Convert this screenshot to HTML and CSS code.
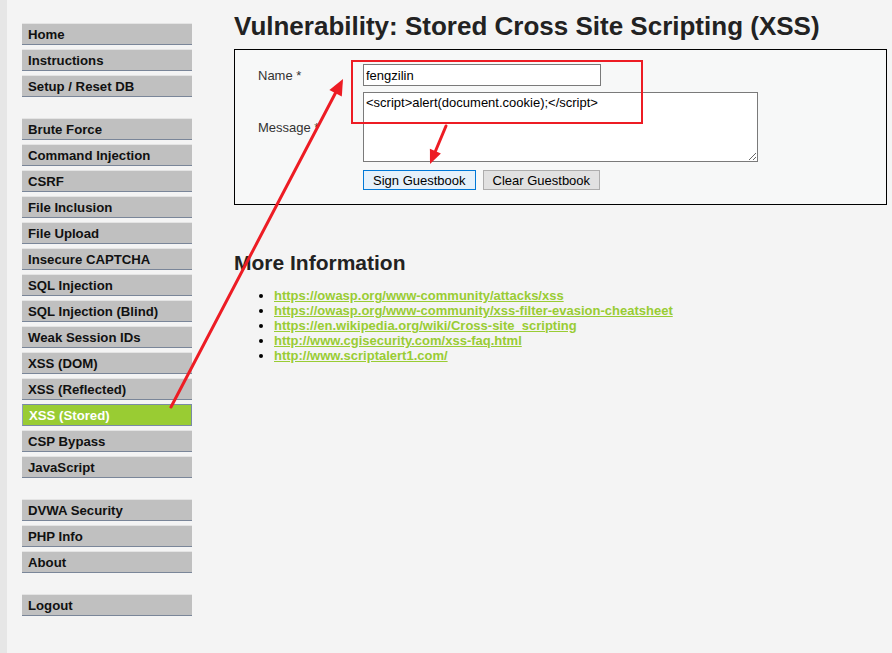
FILE: index.html
```html
<!DOCTYPE html>
<html>
<head>
<meta charset="utf-8">
<link rel="stylesheet" href="styles.css">
</head>
<body>
<div class="page">
  <div class="strip"></div>
  <nav class="sidebar">
    <ul class="menu">
      <li><a>Home</a></li>
      <li><a>Instructions</a></li>
      <li><a>Setup / Reset DB</a></li>
    </ul>
    <ul class="menu">
      <li><a>Brute Force</a></li>
      <li><a>Command Injection</a></li>
      <li><a>CSRF</a></li>
      <li><a>File Inclusion</a></li>
      <li><a>File Upload</a></li>
      <li><a>Insecure CAPTCHA</a></li>
      <li><a>SQL Injection</a></li>
      <li><a>SQL Injection (Blind)</a></li>
      <li><a>Weak Session IDs</a></li>
      <li><a>XSS (DOM)</a></li>
      <li><a>XSS (Reflected)</a></li>
      <li class="active"><a>XSS (Stored)</a></li>
      <li><a>CSP Bypass</a></li>
      <li><a>JavaScript</a></li>
    </ul>
    <ul class="menu">
      <li><a>DVWA Security</a></li>
      <li><a>PHP Info</a></li>
      <li><a>About</a></li>
    </ul>
    <ul class="menu">
      <li><a>Logout</a></li>
    </ul>
  </nav>
  <main class="main">
    <h1 class="title">Vulnerability: Stored Cross Site Scripting (XSS)</h1>
    <div class="code-area">
      <form class="guest-form">
        <label class="lbl">Name *</label>
        <div class="field"><input class="name-input" type="text" value="fengzilin"></div>
        <label class="lbl">Message *</label>
        <div class="field"><textarea class="msg">&lt;script&gt;alert(document.cookie);&lt;/script&gt;</textarea></div>
        <div></div>
        <div class="buttons">
          <button type="button" class="btn btn-focus">Sign Guestbook</button>
          <button type="button" class="btn">Clear Guestbook</button>
        </div>
      </form>
    </div>
    <h2 class="more">More Information</h2>
    <ul class="links">
      <li><a href="#">https://owasp.org/www-community/attacks/xss</a></li>
      <li><a href="#">https://owasp.org/www-community/xss-filter-evasion-cheatsheet</a></li>
      <li><a href="#">https://en.wikipedia.org/wiki/Cross-site_scripting</a></li>
      <li><a href="#">http://www.cgisecurity.com/xss-faq.html</a></li>
      <li><a href="#">http://www.scriptalert1.com/</a></li>
    </ul>
  </main>
</div>
<svg class="annot" width="892" height="653" viewBox="0 0 892 653">
  <rect x="352" y="61" width="290" height="62" fill="none" stroke="#ed1c24" stroke-width="2"/>
  <line x1="171" y1="407" x2="336" y2="92" stroke="#ed1c24" stroke-width="3" stroke-linecap="round"/>
  <polygon points="343,79 341.8,96.4 329.4,89.9" fill="#ed1c24"/>
  <line x1="446" y1="126" x2="435.5" y2="151" stroke="#ed1c24" stroke-width="3" stroke-linecap="round"/>
  <polygon points="430,164 440.9,153.4 429.9,148.8" fill="#ed1c24"/>
</svg>
</body>
</html>
```
FILE: styles.css
```css
html, body {
  margin: 0;
  padding: 0;
}
body {
  background: #f4f4f4;
  font-family: "Liberation Sans", Arial, sans-serif;
  font-size: 13px;
  color: #000;
  width: 892px;
  height: 653px;
  overflow: hidden;
  position: relative;
}
.page {
  display: flex;
  min-height: 653px;
}
.strip {
  width: 7px;
  background: #e6e6e6;
  flex: none;
}
.sidebar {
  width: 170px;
  padding: 23px 0 0 15px;
  flex: none;
}
.menu {
  list-style: none;
  margin: 0 0 21px 0;
  padding: 0;
  display: flex;
  flex-direction: column;
  gap: 4px;
}
.menu a {
  display: block;
  height: 19px;
  line-height: 20px;
  padding: 1px 0 0 6px;
  background: #c0c0c0;
  border-top: 1px solid #e4e4e4;
  border-bottom: 1px solid #7a8699;
  font-weight: bold;
  font-size: 13.2px;
  color: #111;
}
.menu .active a {
  background: #99cc33;
  color: #fff;
  border: 1px solid #7a8aa6;
  border-left-color: #8fa0b8;
}
.main {
  padding-left: 42px;
  flex: 1;
}
.title {
  margin: 10px 0 0 0;
  font-size: 26px;
  line-height: 32px;
  font-weight: bold;
  color: #222;
}
.code-area {
  margin-top: 7px;
  width: 651px;
  border: 1px solid #000;
  background: #f7f8f8;
  padding: 14px 0 14px 0;
}
.guest-form {
  display: grid;
  grid-template-columns: 105px auto;
  row-gap: 6px;
  align-items: center;
  padding-left: 23px;
}
.lbl {
  color: #333;
}
.field {
  display: flex;
}
.name-input {
  box-sizing: border-box;
  width: 238px;
  height: 22px;
  border: 1px solid #7a7a7a;
  background: #fff;
  font-family: "Liberation Sans", Arial, sans-serif;
  font-size: 13px;
  padding: 0 2px;
  margin: 0;
  color: #000;
}
.msg {
  box-sizing: border-box;
  width: 395px;
  height: 70px;
  border: 1px solid #7a7a7a;
  background: #fff;
  font-family: "Liberation Sans", Arial, sans-serif;
  font-size: 13px;
  padding: 2px 2px;
  margin: 0;
  color: #000;
  resize: both;
}
.buttons {
  display: flex;
  gap: 7px;
  margin-top: 2px;
}
.btn {
  box-sizing: border-box;
  height: 20px;
  padding: 0 9px;
  margin: 0;
  font-family: "Liberation Sans", Arial, sans-serif;
  font-size: 13px;
  color: #000;
  background: #e1e1e1;
  border: 1px solid #adadad;
  border-radius: 0;
}
.btn-focus {
  background: #e5f1fb;
  border-color: #0078d7;
}
.more {
  margin: 46px 0 0 0;
  font-size: 21px;
  line-height: 24px;
  font-weight: bold;
  color: #222;
}
.links {
  margin: 13px 0 0 0;
  padding-left: 40px;
  line-height: 15px;
}
.links a {
  color: #99cc33;
  font-weight: bold;
  text-decoration: underline;
}
.annot {
  position: absolute;
  left: 0;
  top: 0;
  pointer-events: none;
}
```
